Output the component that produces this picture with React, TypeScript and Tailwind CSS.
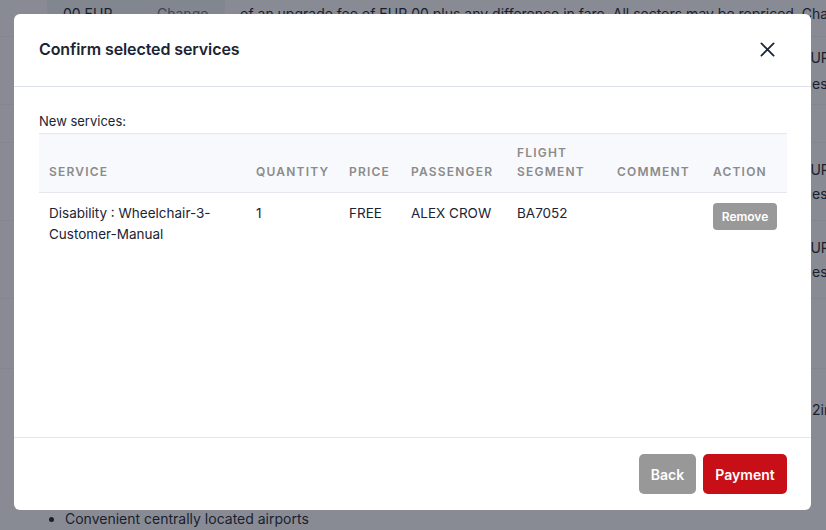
const font = { fontFamily: "Inter, 'Noto Sans', sans-serif" };

interface ServiceRow {
  service: string;
  quantity: number;
  price: string;
  passenger: string;
  segment: string;
  comment: string;
}

const rows: ServiceRow[] = [
  {
    service: "Disability : Wheelchair-3-Customer-Manual",
    quantity: 1,
    price: "FREE",
    passenger: "ALEX CROW",
    segment: "BA7052",
    comment: "",
  },
];

const BackgroundPage = () => (
  <div className="h-[530px] overflow-hidden bg-white text-[14px] text-[#1f2937]">
    <div className="-mt-[10px] flex h-[47px] items-center border-b border-gray-100">
      <div className="ml-[47px] flex h-full w-[178px] shrink-0 items-center bg-gray-100 pl-[16px]">
        <span className="w-[94px]">00 EUR</span>
        <span className="text-gray-500">Change</span>
      </div>
      <span className="ml-[15px] whitespace-nowrap">
        of an upgrade fee of EUR 00 plus any difference in fare. All sectors may be repriced. Changes
      </span>
    </div>
    <div className="flex h-[68px] flex-col justify-center border-b border-gray-100 pl-[802px] leading-[26px]">
      <span>EUR</span>
      <span className="pl-[10px]">es</span>
    </div>
    <div className="h-[38px] border-b border-gray-100" />
    <div className="flex h-[78px] flex-col justify-center border-b border-gray-100 pl-[802px] leading-[24px]">
      <span>EUR</span>
      <span className="pl-[10px]">es</span>
    </div>
    <div className="flex h-[78px] flex-col justify-center border-b border-gray-100 pl-[802px] leading-[24px]">
      <span>EUR</span>
      <span className="pl-[10px]">es</span>
    </div>
    <div className="h-[70px] border-b border-gray-100" />
    <div className="flex h-[80px] items-center pl-[812px]">2in</div>
    <ul className="ml-[65px] mt-[60px] list-disc leading-[20px]">
      <li>Convenient centrally located airports</li>
    </ul>
  </div>
);

export default function App() {
  const headers = ["SERVICE", "QUANTITY", "PRICE", "PASSENGER", "FLIGHT SEGMENT", "COMMENT", "ACTION"];
  const widths = ["w-[207px]", "w-[93px]", "w-[62px]", "w-[106px]", "w-[100px]", "w-[96px]", "w-[84px]"];

  return (
    <div className="relative h-[530px] w-[826px] overflow-hidden" style={font}>
      <BackgroundPage />
      <div className="absolute inset-0 bg-[#111827]/50" />

      <div className="absolute left-[14px] top-[14px] flex h-[496px] w-[797px] flex-col rounded-[6px] bg-white">
        <div className="flex h-[73px] items-center justify-between border-b border-[#dcdfee] pb-[2px] pl-[25px] pr-[36px]">
          <h2 className="text-[16px] font-semibold tracking-[-0.1px] text-[#1b2434]">Confirm selected services</h2>
          <svg width="15" height="15" viewBox="0 0 16 16" className="text-[#1b2434]">
            <path d="M1.5 1.5 L14.5 14.5 M14.5 1.5 L1.5 14.5" stroke="currentColor" strokeWidth="1.9" strokeLinecap="round" />
          </svg>
        </div>

        <div className="flex-1 px-[25px] pt-[26px]">
          <p className="mb-[3px] text-[13px] leading-[17px] text-[#1b2434]">New services:</p>
          <table className="w-[748px] table-fixed border-collapse text-left">
            <thead>
              <tr className="h-[59px] border-y border-[#e5e7ee] bg-[#f8f9fc]">
                {headers.map((h, i) => (
                  <th
                    key={h}
                    className={`${widths[i]} px-[10px] pb-[11px] align-bottom text-[12px] font-semibold leading-[19px] tracking-[1.2px] text-[#8b8b8b]`}
                  >
                    {h === "FLIGHT SEGMENT" ? (
                      <>
                        FLIGHT
                        <br />
                        SEGMENT
                      </>
                    ) : (
                      h
                    )}
                  </th>
                ))}
              </tr>
            </thead>
            <tbody>
              {rows.map((r) => (
                <tr key={r.service} className="align-top text-[13.5px] leading-[21px] text-[#1b2434]">
                  <td className="px-[10px] pt-[10px]">
                    Disability : Wheelchair-3-
                    <br />
                    Customer-Manual
                  </td>
                  <td className="px-[10px] pt-[10px]">{r.quantity}</td>
                  <td className="px-[10px] pt-[10px]">{r.price}</td>
                  <td className="px-[10px] pt-[10px]">{r.passenger}</td>
                  <td className="px-[10px] pt-[10px]">{r.segment}</td>
                  <td className="px-[10px] pt-[10px]">{r.comment}</td>
                  <td className="px-[10px] pt-[10px]">
                    <button className="h-[27px] w-[64px] rounded-[4px] bg-[#999999] text-[12px] font-semibold text-white">
                      Remove
                    </button>
                  </td>
                </tr>
              ))}
            </tbody>
          </table>
        </div>

        <div className="flex h-[73px] items-center justify-end gap-[7px] border-t border-[#e5e7ee] pr-[24px]">
          <button className="h-[40px] w-[57px] rounded-[5px] bg-[#989898] text-[14px] font-semibold text-white">
            Back
          </button>
          <button className="h-[40px] w-[84px] rounded-[5px] bg-[#c80f17] text-[14px] font-semibold text-white">
            Payment
          </button>
        </div>
      </div>
    </div>
  );
}
